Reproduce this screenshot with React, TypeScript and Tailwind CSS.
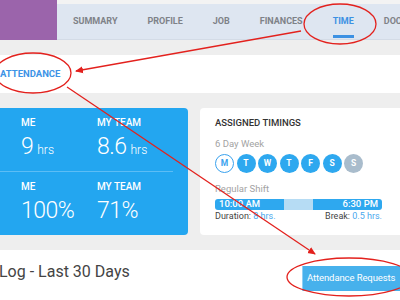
const tabs = ["SUMMARY", "PROFILE", "JOB", "FINANCES", "TIME", "DOCUMENTS"];

const days = [
  { d: "M", kind: "outline" },
  { d: "T", kind: "on" },
  { d: "W", kind: "on" },
  { d: "T", kind: "on" },
  { d: "F", kind: "on" },
  { d: "S", kind: "on" },
  { d: "S", kind: "off" },
];

const Stat = ({ label, value, unit }: { label: string; value: string; unit?: string }) => (
  <div className="w-[76px] shrink-0">
    <div className="text-[10px] font-medium leading-[12px]">{label}</div>
    <div className="mt-[3px] flex items-baseline leading-[30px]">
      <span className="text-[23px] font-light tracking-[-0.5px]">{value}</span>
      {unit && <span className="ml-[4px] text-[12px] font-light">{unit}</span>}
    </div>
  </div>
);

const Annotations = () => (
  <svg className="pointer-events-none absolute left-0 top-0" width="400" height="300" viewBox="0 0 400 300">
    <defs>
      <marker id="head" markerWidth="8" markerHeight="8" refX="7" refY="4" orient="auto" markerUnits="userSpaceOnUse">
        <path d="M0,0.5 L8,4 L0,7.5 Z" fill="#e3211d" />
      </marker>
    </defs>
    <g fill="none" stroke="#e3211d" strokeWidth="1.3">
      <ellipse cx="340" cy="24" rx="36" ry="20" />
      <ellipse cx="33" cy="73" rx="38" ry="20" />
      <ellipse cx="349" cy="277" rx="62" ry="19" />
      <line x1="301" y1="31" x2="76" y2="71" markerEnd="url(#head)" />
      <line x1="67" y1="87" x2="315" y2="254" markerEnd="url(#head)" />
    </g>
  </svg>
);

export default function App() {
  return (
    <div className="relative h-[300px] w-[400px] overflow-hidden bg-white font-['Roboto',sans-serif]">
      {/* header */}
      <div className="flex h-[40px]">
        <div className="w-[57px] shrink-0 bg-[#9b64ab]" />
        <div className="flex min-w-0 flex-1 flex-col">
          <div className="h-[4px] bg-[#f3f3f3]" />
          <nav className="flex flex-1 items-center gap-[30px] border-b border-[#d3dbe6] bg-[#dee6f1] pl-[16px]">
            {tabs.map((t) => (
              <div
                key={t}
                className={`relative flex h-full shrink-0 items-center text-[9px] font-bold ${
                  t === "TIME" ? "text-[#3c91e3]" : "text-[#7e8288]"
                }`}
              >
                {t}
                {t === "TIME" && <span className="absolute bottom-[1px] left-0 right-0 h-[3px] bg-[#3c91e3]" />}
              </div>
            ))}
          </nav>
        </div>
      </div>

      <div className="h-[15px] bg-[#eeeeee]" />
      <div className="flex h-[38px] items-center bg-white">
        <span className="text-[9.5px] font-bold text-[#3d93e6]">ATTENDANCE</span>
      </div>

      {/* cards */}
      <div className="flex h-[157px] gap-[12px] bg-[#eeeeee] pt-[15px]">
        <div className="h-[127px] w-[188px] shrink-0 rounded-r-[4px] bg-[#23a6f0] text-white">
          <div className="flex h-[63px] pl-[21px] pt-[9px]">
            <Stat label="ME" value="9" unit="hrs" />
            <Stat label="MY TEAM" value="8.6" unit="hrs" />
          </div>
          <div className="h-px w-[173px] bg-[#5cbdf5]" />
          <div className="flex pl-[21px] pt-[9px]">
            <Stat label="ME" value="100%" />
            <Stat label="MY TEAM" value="71%" />
          </div>
        </div>

        <div className="h-[127px] w-[215px] shrink-0 rounded-[4px] bg-white pl-[15px] pt-[9px]">
          <div className="text-[9.5px] font-medium leading-[12px] text-[#333]">ASSIGNED TIMINGS</div>
          <div className="mt-[9px] text-[9.5px] leading-[11px] text-[#a3a3a3]">6 Day Week</div>
          <div className="mt-[5px] flex gap-[2.5px]">
            {days.map((x, i) => (
              <div
                key={i}
                className={`flex h-[19px] w-[19px] items-center justify-center rounded-full text-[8.5px] font-bold ${
                  x.kind === "outline"
                    ? "border border-[#3aa2ee] bg-white text-[#3aa2ee]"
                    : x.kind === "on"
                    ? "bg-[#2ea8ef] text-white"
                    : "bg-[#a9bccc] text-white"
                }`}
              >
                {x.d}
              </div>
            ))}
          </div>
          <div className="mt-[10px] text-[9.5px] leading-[11px] text-[#a3a3a3]">Regular Shift</div>
          <div className="relative mt-[5px] flex h-[11px] w-[167px] overflow-hidden rounded-[3px]">
            <div className="w-[69px] bg-[#2ea8ef]" />
            <div className="w-[29px] bg-[#b6dcf4]" />
            <div className="w-[69px] bg-[#2ea8ef]" />
            <div className="absolute inset-0 flex items-center justify-between px-[4px] text-[9.5px] font-medium text-white">
              <span>10:00 AM</span>
              <span>6:30 PM</span>
            </div>
          </div>
          <div className="mt-[1px] flex w-[167px] justify-between text-[9px] leading-[11px] text-[#444]">
            <span>
              Duration: <span className="text-[#4aa8ee]">8 hrs.</span>
            </span>
            <span>
              Break: <span className="text-[#4aa8ee]">0.5 hrs.</span>
            </span>
          </div>
        </div>
      </div>

      {/* log */}
      <div className="flex items-start justify-between pt-[12px]">
        <span className="-ml-[1px] text-[16px] leading-[20px] text-[#444]">Log - Last 30 Days</span>
        <button className="mt-[4px] h-[25px] w-[98px] shrink-0 whitespace-nowrap border-l border-[#8fd0f5] bg-[#47b1ec] pl-[4px] text-left text-[9.5px] tracking-[-0.1px] text-white">
          Attendance Requests
        </button>
      </div>

      <Annotations />
    </div>
  );
}
